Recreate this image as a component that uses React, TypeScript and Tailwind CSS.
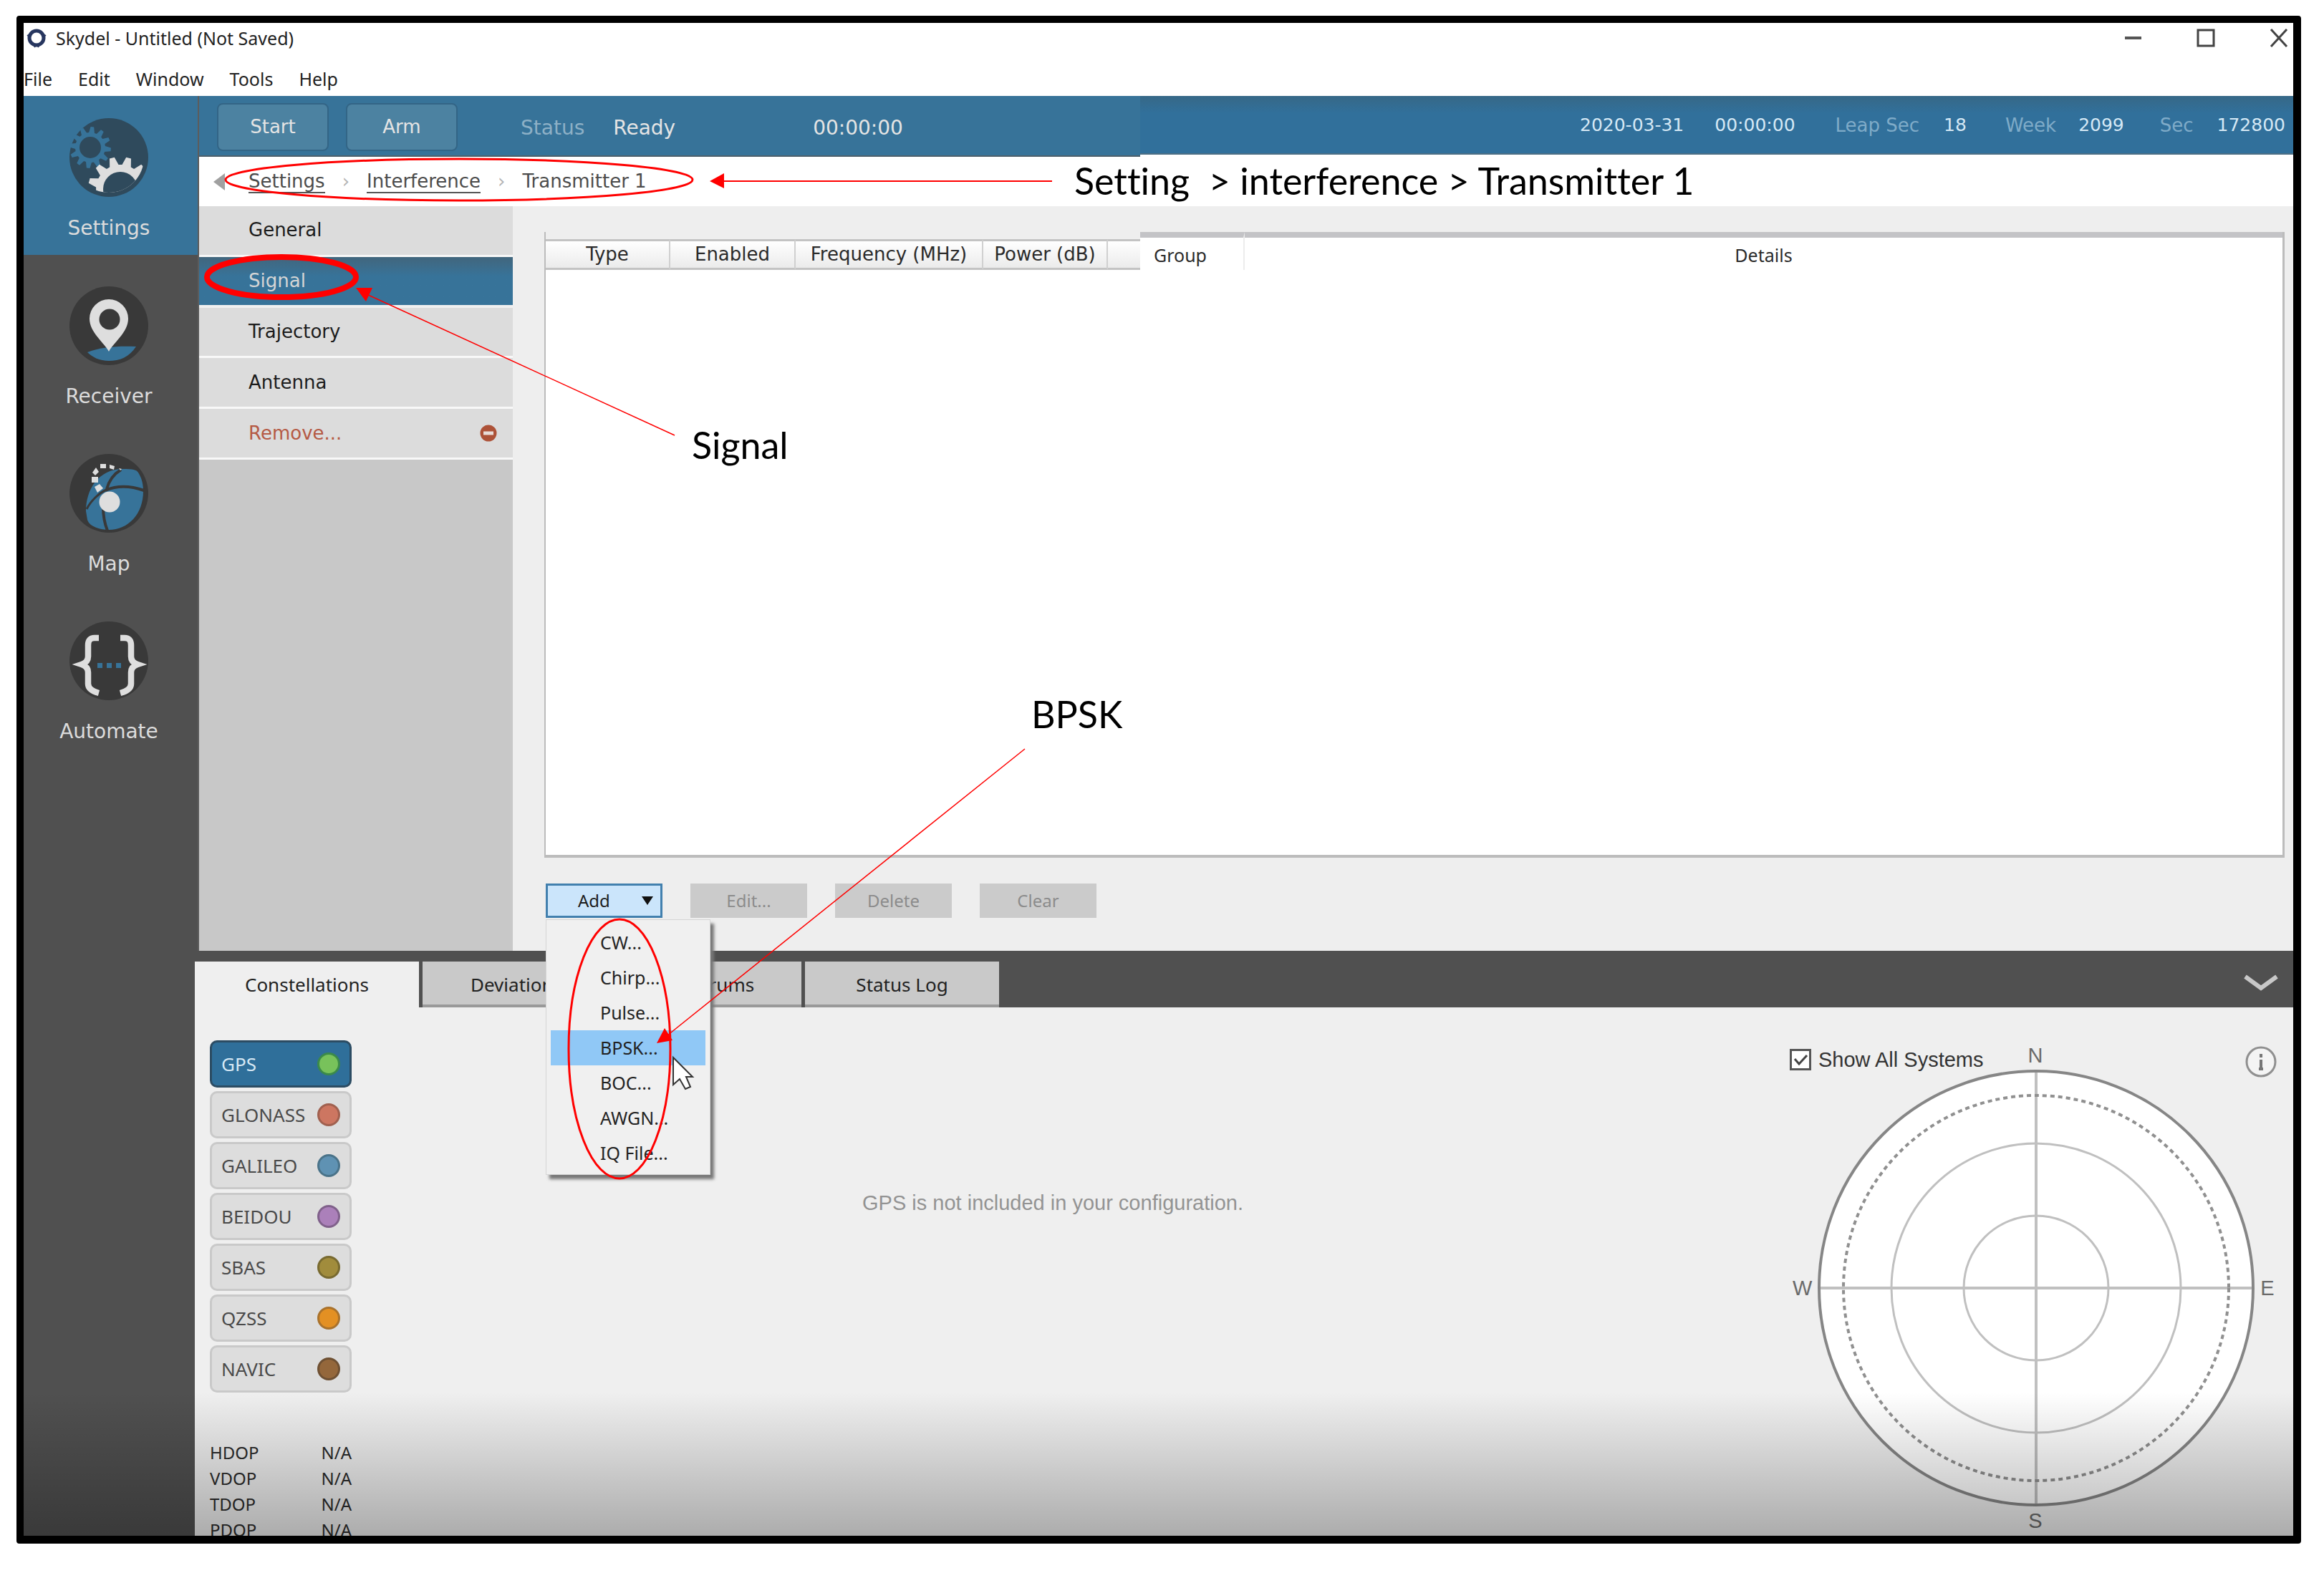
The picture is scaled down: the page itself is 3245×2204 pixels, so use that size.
import { useState } from 'react';
import type { ReactNode } from 'react';

const dejavu = "font-['DejaVu_Sans',sans-serif]";

/* Closed gear outline, used by the settings icon */
const gearPath = (cx: number, cy: number, body: number, tip: number, teeth: number, offset: number) => {
  const step = (Math.PI * 2) / teeth;
  const at = (r: number, a: number) =>
    `${(cx + r * Math.cos(a)).toFixed(1)} ${(cy + r * Math.sin(a)).toFixed(1)}`;
  let d = '';
  for (let i = 0; i < teeth; i++) {
    const a = offset + i * step;
    d += `${i === 0 ? 'M' : 'L'}${at(body, a - step * 0.36)}L${at(tip, a - step * 0.15)}L${at(tip, a + step * 0.15)}L${at(body, a + step * 0.36)}`;
  }
  return `${d}Z`;
};

const IconDisc = ({ fill, children }: { fill: string; children: ReactNode }) => (
  <svg viewBox="0 0 110 110" className="size-[110px]" aria-hidden="true">
    <circle cx="55" cy="55" r="55" fill={fill} />
    {children}
  </svg>
);

const SettingsIcon = () => (
  <IconDisc fill="#2f4a5c">
    <clipPath id="gear-clip">
      <circle cx="55" cy="55" r="49" />
    </clipPath>
    <path d={gearPath(29, 41, 21, 29, 12, 0.1)} fill="#377399" />
    <circle cx="29" cy="41" r="15" fill="#2f4a5c" />
    <g clipPath="url(#gear-clip)">
      <path d={gearPath(71, 99, 34, 45, 12, Math.PI / 12)} fill="#dedede" />
      <circle cx="71" cy="99" r="24" fill="#2f4a5c" />
    </g>
  </IconDisc>
);

const ReceiverIcon = () => (
  <IconDisc fill="#393939">
    <path d="M25 92C46 84 70 83 93 84C83 99 70 104 55 104C42 104 32 99 25 92Z" fill="#377399" />
    <path d="M55 91C48 78 28 64 28 45A27 27 0 0 1 82 45C82 64 62 78 55 91Z" fill="#dedede" />
    <circle cx="56" cy="46" r="14.5" fill="#393939" />
  </IconDisc>
);

const MapIcon = () => (
  <IconDisc fill="#393939">
    <path d="M23 80C23 50 40 21 75 21C88 21 94 22 96 26C101 34 103 42 103 52C103 84 82 106 55 106C44 106 28 102 25 92Z" fill="#377399" />
    <g fill="none" stroke="#393939" strokeWidth="4">
      <path d="M52 49C55 38 62 28 72 22" />
      <path d="M50 51C66 44 84 44 104 51" />
      <path d="M52 50C42 54 30 65 24 77" strokeWidth="3" />
      <path d="M47 74C47 86 49 97 53 107" />
    </g>
    <circle cx="56" cy="67" r="14.5" fill="#dedede" />
    <path d="M35 46l7 -4 5 6 -8 6ZM31 32h9v8h-9ZM32 26l5 -7 4 6 -5 5ZM43 14h8v6h-8ZM56 15l7 2 -1 5 -6 -2ZM69 20l4 1 -2 2Z" fill="#dedede" />
  </IconDisc>
);

const AutomateIcon = () => (
  <IconDisc fill="#393939">
    <path
      d="M41 23H35Q26 23 26 33V49Q26 57 17 60Q26 63 26 71V87Q26 96 41 100M71 23H77Q86 23 86 33V49Q86 57 95 60Q86 63 86 71V87Q86 96 71 100"
      fill="none"
      stroke="#dedede"
      strokeWidth="8.5"
    />
    <path d="M39 58h7v7h-7ZM52 58h7v7h-7ZM65 58h7v7h-7Z" fill="#377399" />
  </IconDisc>
);

const navItems = [
  { label: 'Receiver', icon: <ReceiverIcon /> },
  { label: 'Map', icon: <MapIcon /> },
  { label: 'Automate', icon: <AutomateIcon /> },
];

const addItems = ['CW...', 'Chirp...', 'Pulse...', 'BPSK...', 'BOC...', 'AWGN...', 'IQ File...'];

const systems = [
  { name: 'GPS', led: 'bg-[#78c25b] border-[#3b8a4a]' },
  { name: 'GLONASS', led: 'bg-[#cd7661] border-[#a0604f]' },
  { name: 'GALILEO', led: 'bg-[#5f92b3] border-[#4a7389]' },
  { name: 'BEIDOU', led: 'bg-[#ab80ba] border-[#80618b]' },
  { name: 'SBAS', led: 'bg-[#a18c3c] border-[#786a30]' },
  { name: 'QZSS', led: 'bg-[#e39023] border-[#a9722c]' },
  { name: 'NAVIC', led: 'bg-[#94673b] border-[#6e5033]' },
];

const TitleBar = () => (
  <header className="flex h-[102px] shrink-0 flex-col bg-white text-[#222]">
    <div className="flex h-[42px] items-center">
      <svg viewBox="0 0 28 28" className="ml-[4px] size-[28px]" aria-hidden="true">
        <circle cx="14" cy="14" r="10" fill="none" stroke="#27365f" strokeWidth="5" />
        <path d="M1 11l5 -3M27 11l-5 -3M11 27l3 -4 3 4" stroke="#27365f" strokeWidth="2" fill="none" />
      </svg>
      <h1 className="ml-[13px] text-[25px] leading-[42px]">Skydel - Untitled (Not Saved)</h1>
      <div className="ml-auto flex items-center gap-[76px] pr-[7px]">
        <button aria-label="Minimize">
          <svg viewBox="0 0 24 26" className="h-[26px] w-[24px]">
            <path d="M0 13H23" stroke="#555" strokeWidth="4" />
          </svg>
        </button>
        <button aria-label="Maximize">
          <svg viewBox="0 0 26 26" className="h-[26px] w-[26px]">
            <rect x="2" y="2" width="22" height="22" fill="none" stroke="#444" strokeWidth="3" />
          </svg>
        </button>
        <button aria-label="Close">
          <svg viewBox="0 0 26 26" className="h-[26px] w-[26px]">
            <path d="M2 1L24 25M24 1L2 25" stroke="#444" strokeWidth="3" />
          </svg>
        </button>
      </div>
    </div>
    <nav className="flex flex-1 items-center gap-[36px] pt-[14px] text-[25px]">
      {['File', 'Edit', 'Window', 'Tools', 'Help'].map((item) => (
        <button key={item}>{item}</button>
      ))}
    </nav>
  </header>
);

const Sidebar = () => (
  <nav className={`${dejavu} flex w-[245px] shrink-0 flex-col border-r-2 border-[#5c5c5c] bg-[#505050] text-[28px] leading-[36px] text-[#dcdcdc]`}>
    <button className="flex h-[222px] flex-col items-center gap-[26px] bg-[#377399] pt-[31px] pr-[5px]">
      <SettingsIcon />
      Settings
    </button>
    {navItems.map((item) => (
      <button key={item.label} className="flex h-[234px] flex-col items-center gap-[26px] pt-[44px] pr-[5px]">
        {item.icon}
        {item.label}
      </button>
    ))}
  </nav>
);

const StatusBar = () => (
  <div className={`${dejavu} flex h-[85px] shrink-0 items-start text-[#e4e4e4]`}>
    <div className="flex h-full w-[1314px] items-center border-b-2 border-[#4d5f6b] bg-[#377399] pt-[3px] pl-[25px]">
      <button className="h-[67px] w-[156px] rounded-lg border-2 border-[#336586] bg-[#4c82a1] text-[26px]">Start</button>
      <button className="ml-[24px] h-[67px] w-[156px] rounded-lg border-2 border-[#336586] bg-[#4c82a1] text-[26px]">Arm</button>
      <div className="ml-[88px] flex pt-[4px] text-[28px]">
        <span className="text-[#8db0c6]">Status</span>
        <span className="ml-[40px]">Ready</span>
        <span className="ml-[192px]">00:00:00</span>
      </div>
    </div>
    <div className="flex h-[82px] flex-1 items-center justify-end border-b-2 border-[#4d6f85] bg-linear-to-b from-[#366887] to-[#31709b] to-30% pt-[2px] pr-[11px] text-[25px] text-[#d5e8f5]">
      <span>2020-03-31</span>
      <span className="ml-[43px]">00:00:00</span>
      <span className="ml-[56px] text-[26px] text-[#7fabc8]">Leap Sec</span>
      <span className="ml-[34px]">18</span>
      <span className="ml-[54px] text-[26px] text-[#7fabc8]">Week</span>
      <span className="ml-[31px]">2099</span>
      <span className="ml-[50px] text-[26px] text-[#7fabc8]">Sec</span>
      <span className="ml-[33px]">172800</span>
    </div>
  </div>
);

const Breadcrumb = () => (
  <nav aria-label="Breadcrumb" className={`${dejavu} flex h-[69px] shrink-0 items-center bg-white pl-[20px] text-[26px] text-[#4c4c4c]`}>
    <button aria-label="Back">
      <svg viewBox="0 0 16 24" className="h-[24px] w-[16px]">
        <path d="M0 12L16 0V24Z" fill="#a0a0a0" />
      </svg>
    </button>
    <a href="#settings" className="ml-[33px] border-b-2 border-[#555] leading-[30px]">Settings</a>
    <span className="mx-[24px] text-[#b4b4b4]">›</span>
    <a href="#interference" className="border-b-2 border-[#555] leading-[30px]">Interference</a>
    <span className="mx-[24px] text-[#b4b4b4]">›</span>
    <span>Transmitter 1</span>
  </nav>
);

const SectionMenu = () => (
  <div className="w-[438px] shrink-0 bg-[#c8c8c8]">
    <ul className={`${dejavu} flex h-[354px] flex-col text-[26px] text-[#1c1c1c]`}>
      {['General', 'Signal', 'Trajectory', 'Antenna'].map((item) => (
        <li key={item} className="flex flex-1">
          <button
            className={
              item === 'Signal'
                ? 'flex-1 border-b-4 border-[#f0f0f0] bg-linear-to-b from-[#41667d] to-[#377399] to-40% pl-[69px] text-left text-[#d5d5d5]'
                : 'flex-1 border-b-3 border-[#f8f8f8] bg-[#dcdcdc] pl-[69px] text-left'
            }
          >
            {item}
          </button>
        </li>
      ))}
      <li className="flex flex-1">
        <button className="flex flex-1 items-center justify-between border-b-3 border-[#f8f8f8] bg-[#dcdcdc] pr-[22px] pl-[69px] text-[#b55a45]">
          Remove...
          <svg viewBox="0 0 24 24" className="size-[24px]" aria-hidden="true">
            <circle cx="12" cy="12" r="11.5" fill="#ad5238" />
            <rect x="5" y="9.5" width="14" height="5" fill="#e8dcd8" />
          </svg>
        </button>
      </li>
    </ul>
  </div>
);

const SignalTable = () => (
  <div className="flex-1 border-r-3 border-b-4 border-l-2 border-[#bcbcbc] bg-white">
    <table className="w-full table-fixed border-separate border-spacing-0">
      <colgroup>
        <col className="w-[174px]" />
        <col className="w-[175px]" />
        <col className="w-[262px]" />
        <col className="w-[174px]" />
        <col className="w-[45px]" />
        <col className="w-[146px]" />
        <col />
      </colgroup>
      <thead>
        <tr className="h-[53px] text-[#2b2b2b]">
          {['Type', 'Enabled', 'Frequency (MHz)', 'Power (dB)', ''].map((label, i) => (
            <th key={i} className={`${dejavu} bg-[#eeeeee] p-0 pt-[10px] text-[26px] font-normal`}>
              <div
                className={
                  label
                    ? 'h-[43px] border-y-3 border-r-2 border-y-[#c3c3c3] border-r-[#d0d0d0] bg-linear-to-b from-white to-[#ebebeb] leading-[36px] whitespace-nowrap'
                    : 'h-[43px] border-y-3 border-[#c3c3c3] bg-linear-to-b from-white to-[#ebebeb]'
                }
              >
                {label}
              </div>
            </th>
          ))}
          <th className="p-0 text-[25px] font-normal">
            <div className="h-[53px] border-t-8 border-r-2 border-t-[#c3c3c6] border-r-[#ececec] pr-[32px] leading-[48px]">Group</div>
          </th>
          <th className="p-0 text-[25px] font-normal">
            <div className="h-[53px] border-t-8 border-[#c3c3c6] leading-[48px]">Details</div>
          </th>
        </tr>
      </thead>
      <tbody />
    </table>
  </div>
);

const AddMenu = () => (
  <div className="relative z-10">
    <button className="flex h-[48px] w-[163px] items-center border-3 border-[#4280ae] bg-[#cbe5fb] pl-[42px] text-[24px] text-[#1d1d1d]">
      Add
      <svg viewBox="0 0 16 12" className="ml-auto mr-[10px] h-[12px] w-[16px]" aria-hidden="true">
        <path d="M0 0H16L8 12Z" fill="#111" />
      </svg>
    </button>
    <ul className="absolute top-[50px] left-0 w-[230px] border border-[#d5d5d5] bg-[#f0f0f0] px-[6px] pt-[7px] pb-[5px] text-[25px] leading-[49px] text-[#222] shadow-[5px_6px_4px_#777]">
      {addItems.map((item) => (
        <li key={item}>
          <button className={item === 'BPSK...' ? 'block w-full bg-[#90c8f6] pl-[69px] text-left' : 'block w-full pl-[69px] text-left'}>
            {item}
          </button>
        </li>
      ))}
    </ul>
  </div>
);

const SignalPanel = () => (
  <section className="flex flex-1 flex-col bg-[#eeeeee] pt-[36px] pr-[12px] pb-[46px] pl-[44px]">
    <SignalTable />
    <div className="mt-[36px] flex gap-[39px] pl-[2px]">
      <AddMenu />
      {['Edit...', 'Delete', 'Clear'].map((label) => (
        <button key={label} disabled className="h-[48px] w-[163px] bg-[#cbcbcb] text-[24px] text-[#8c8c8c]">
          {label}
        </button>
      ))}
    </div>
  </section>
);

const SkyPlot = () => (
  <svg viewBox="-306 -306 612 612" className="size-[612px]" aria-label="Sky plot">
    <circle r="303" fill="#fff" stroke="#868686" strokeWidth="4" />
    <g fill="none" stroke="#c0c0c0" strokeWidth="4">
      <path d="M-301 0H301" />
      <path d="M0 -301V301" />
      <circle r="202" strokeWidth="3" />
      <circle r="101" strokeWidth="3" />
    </g>
    <circle r="269" fill="none" stroke="#909090" strokeWidth="4" strokeDasharray="6 5" />
  </svg>
);

const Dock = () => {
  const [showAll, setShowAll] = useState(true);

  return (
    <section className="-ml-[6px] flex h-[817px] shrink-0 flex-col bg-[#efefef]">
      <div className="flex h-[79px] shrink-0 items-stretch bg-[#505050] pt-[15px] text-[26px] text-[#222]">
        <button className="w-[313px] bg-[#efefef]">Constellations</button>
        <button className="ml-[5px] w-[262px] border-b-4 border-[#999] bg-[#c9c9c9] pt-[4px]">Deviations</button>
        <button className="ml-[5px] w-[262px] border-b-4 border-[#999] bg-[#c9c9c9] pt-[4px]">Spectrums</button>
        <button className="ml-[5px] w-[271px] border-b-4 border-[#999] bg-[#c9c9c9] pt-[4px]">Status Log</button>
        <button aria-label="Collapse" className="mr-[21px] ml-auto pb-[4px]">
          <svg viewBox="0 0 48 24" className="h-[24px] w-[48px]">
            <path d="M2 3L24 19L46 3" fill="none" stroke="#c8c8c8" strokeWidth="6" />
          </svg>
        </button>
      </div>

      <div className="flex flex-1 overflow-hidden">
        <div className="ml-[21px] w-[198px] shrink-0 pt-[46px]">
          <ul className="flex flex-col gap-[5px]">
            {systems.map((system) => (
              <li key={system.name}>
                <button
                  className={
                    system.name === 'GPS'
                      ? 'flex h-[66px] w-full items-center justify-between rounded-[10px] border-3 border-[#2c4c63] bg-[#2f6f9a] px-[13px] text-[26px] text-[#d7e9f5]'
                      : 'flex h-[66px] w-full items-center justify-between rounded-[10px] border-3 border-[#c9c9c9] bg-[#dddddd] px-[13px] text-[26px] text-[#4a4a4a]'
                  }
                >
                  {system.name}
                  <span className={`size-[32px] rounded-full border-3 ${system.led}`} />
                </button>
              </li>
            ))}
          </ul>
          <dl className="mt-[66px] grid grid-cols-[1fr_auto] text-[24px] leading-[36px] text-[#2b2b2b]">
            {['HDOP', 'VDOP', 'TDOP', 'PDOP'].map((name) => (
              <div key={name} className="contents">
                <dt>{name}</dt>
                <dd>N/A</dd>
              </div>
            ))}
          </dl>
        </div>

        <p className="flex-1 pt-[255px] text-center font-['Liberation_Sans',sans-serif] text-[29px] leading-[36px] text-[#939393]">
          GPS is not included in your configuration.
        </p>

        <div className="w-[753px] shrink-0 pt-[48px] font-['Liberation_Sans',sans-serif] text-[29px] leading-[38px] text-[#6a6a6a]">
          <div className="grid h-[38px] grid-cols-[376px_34px_1fr] items-start">
            <label className="flex items-center pt-[6px] pl-[50px] whitespace-nowrap text-[#333]">
              <input
                type="checkbox"
                checked={showAll}
                onChange={() => setShowAll(!showAll)}
                className="peer sr-only"
              />
              <svg viewBox="0 0 30 30" className="mr-[10px] size-[30px]" aria-hidden="true">
                <rect x="1.5" y="1.5" width="27" height="27" fill="#fff" stroke="#555" strokeWidth="3" />
                {showAll && <path d="M7 14L13 21L24 9" fill="none" stroke="#444" strokeWidth="3" />}
              </svg>
              Show All Systems
            </label>
            <span className="text-center">N</span>
            <button aria-label="Information" className="mt-[6px] mr-[23px] justify-self-end">
              <svg viewBox="0 0 44 44" className="size-[44px]">
                <circle cx="22" cy="22" r="20" fill="#f4f4f4" stroke="#909090" strokeWidth="3" />
                <path d="M22 11v5M22 19v14M19 32h6" stroke="#777" strokeWidth="4" fill="none" />
              </svg>
            </button>
          </div>
          <div className="flex items-center pl-[54px]">
            <span className="w-[34px]">W</span>
            <SkyPlot />
            <span className="w-[34px] text-center">E</span>
          </div>
          <div className="pl-[376px]">
            <div className="w-[34px] text-center">S</div>
          </div>
        </div>
      </div>
    </section>
  );
};

/* Red call-outs drawn over the window */
const Annotations = () => (
  <div className="pointer-events-none absolute inset-0 z-20 font-['Lato',sans-serif] text-[52px] leading-[64px] text-black [font-variant-ligatures:none]">
    <svg className="absolute inset-0 h-full w-full" aria-hidden="true">
      <g fill="none" stroke="#f00">
        <ellipse cx="641" cy="251" rx="326" ry="29" strokeWidth="3" />
        <ellipse cx="393" cy="387" rx="104" ry="28" strokeWidth="8" />
        <ellipse cx="865" cy="1465" rx="71" ry="181" strokeWidth="3" />
        <path d="M1469 253H1008" strokeWidth="2" />
        <path d="M942 608L512 411M1431 1046L932 1446" strokeWidth="1.5" />
      </g>
      <path d="M991 253L1011 242V263ZM497 402L520 402L511 421ZM917 1457L928 1436L939 1453Z" fill="#f00" />
      <path d="M940 1477V1515L949 1507L957 1521L964 1518L958 1504H967Z" fill="#fff" stroke="#333" strokeWidth="2" />
    </svg>
    <span className="absolute top-[220px] left-[1500px] whitespace-pre">Setting  &gt; interference &gt; Transmitter 1</span>
    <span className="absolute top-[589px] left-[966px]">Signal</span>
    <span className="absolute top-[965px] left-[1440px]">BPSK</span>
  </div>
);

export default function App() {
  return (
    <div className="relative h-screen bg-white pt-[22px] pr-[32px] pb-[48px] pl-[23px] font-['Noto_Sans',sans-serif]">
      <div className="relative flex h-full flex-col overflow-hidden rounded-[4px] border-[10px] border-r-[11px] border-b-[11px] border-black bg-white">
        <TitleBar />
        <div className="flex flex-1">
          <Sidebar />
          <main className="flex min-w-0 flex-1 flex-col">
            <StatusBar />
            <Breadcrumb />
            <div className="flex flex-1">
              <SectionMenu />
              <SignalPanel />
            </div>
            <Dock />
          </main>
        </div>
        <div className="pointer-events-none absolute inset-x-0 bottom-0 h-[200px] bg-linear-to-b from-transparent to-black/28" />
      </div>
      <Annotations />
    </div>
  );
}
